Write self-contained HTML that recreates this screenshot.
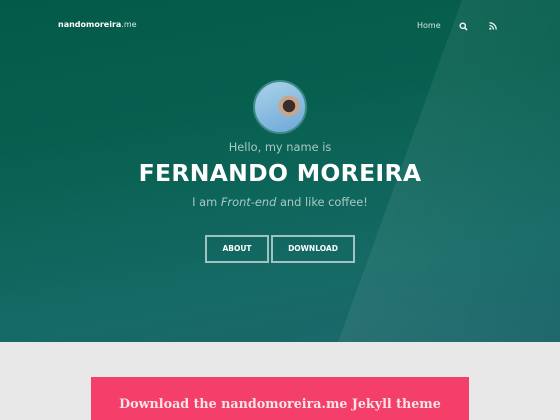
<!DOCTYPE html>
<html><head><meta charset="utf-8"><style>
*{margin:0;padding:0;box-sizing:border-box}
html,body{width:560px;height:420px;overflow:hidden}
body{background:#e8e8e8;font-family:"DejaVu Sans","Liberation Sans",sans-serif;position:relative}
.hero{position:absolute;left:0;top:0;width:560px;height:342px;background:linear-gradient(170deg,#045a48 0%,#07604f 35%,#156a66 75%,#1d666b 100%);overflow:hidden}
.band{position:absolute;left:0;top:0;width:560px;height:342px;background:linear-gradient(110deg,rgba(255,255,255,0) 0%,rgba(255,255,255,0.08) 60%,rgba(255,255,255,0.01) 100%);clip-path:polygon(462px 0,560px 0,560px 342px,338px 342px)}
.logo{position:absolute;left:58px;top:20px;color:#fff;font-size:8px;font-weight:bold}
.logo span{font-weight:normal;color:#d8ece8}
.nav{position:absolute;top:21px;color:#d5e6e2;font-size:8px}
.av{position:absolute;left:253px;top:80px;width:54px;height:54px;border-radius:50%;border:2px solid #3d8b88;background:radial-gradient(circle at 68% 48%,#3a2c2a 0 14%,#c9a58a 15% 24%,transparent 25%),linear-gradient(160deg,#a9d2ea,#6fa8d8)}
.c{position:absolute;left:0;width:560px;text-align:center}
.btn{position:absolute;top:235px;height:28px;border:2px solid rgba(255,255,255,0.6);color:#fff;font-size:7.5px;font-weight:bold;text-align:center;line-height:24px}
.pink{position:absolute;left:91px;top:377px;width:378px;height:43px;background:#f33f69;color:#fbe3e8;font-family:"DejaVu Serif","Liberation Serif",serif;font-weight:bold;font-size:12.7px;text-align:center;padding-top:19px}
</style></head><body>
<div class="hero"><div class="band"></div>
<div class="logo">nandomoreira<span>.me</span></div>
<div class="nav" style="left:417px">Home</div>
<svg style="position:absolute;left:459px;top:22px" width="9" height="9" viewBox="0 0 9 9"><circle cx="3.8" cy="3.8" r="2.6" fill="none" stroke="#e6f0ee" stroke-width="1.5"/><line x1="5.7" y1="5.7" x2="8" y2="8" stroke="#e6f0ee" stroke-width="1.7"/></svg>
<svg style="position:absolute;left:489px;top:22px" width="8" height="8" viewBox="0 0 8 8"><circle cx="1.3" cy="6.7" r="1.1" fill="#e6f0ee"/><path d="M0.5 3.5A4 4 0 0 1 4.5 7.5M0.5 0.8A6.7 6.7 0 0 1 7.2 7.5" fill="none" stroke="#e6f0ee" stroke-width="1.3"/></svg>
<div class="av"></div>
<div class="c" style="top:140px;font-size:11.4px;color:#a9c9c2">Hello, my name is</div>
<div class="c" style="top:159px;font-size:23.5px;font-weight:bold;color:#fff;letter-spacing:0.3px">FERNANDO MOREIRA</div>
<div class="c" style="top:195px;font-size:11.4px;color:#a9c9c2">I am <i>Front-end</i> and like coffee!</div>
<div class="btn" style="left:205px;width:64px">ABOUT</div>
<div class="btn" style="left:271px;width:84px">DOWNLOAD</div>
</div>
<div class="pink">Download the nandomoreira.me Jekyll theme</div>
</body></html>
